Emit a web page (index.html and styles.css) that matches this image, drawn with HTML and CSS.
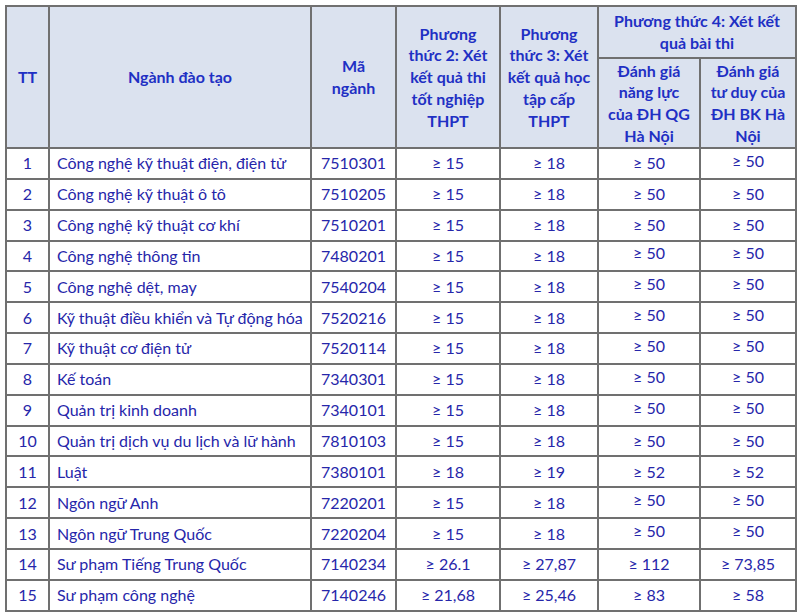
FILE: index.html
```html
<!DOCTYPE html>
<html lang="vi">
<head>
<meta charset="utf-8">
<link rel="stylesheet" href="styles.css">
</head>
<body>
<table class="score-table">
  <colgroup>
    <col class="c-tt">
    <col class="c-name">
    <col class="c-code">
    <col class="c-p2">
    <col class="c-p3">
    <col class="c-p4a">
    <col class="c-p4b">
  </colgroup>
  <thead>
    <tr class="h1">
      <th rowspan="2">TT</th>
      <th rowspan="2">Ngành đào tạo</th>
      <th rowspan="2">Mã<br>ngành</th>
      <th rowspan="2">Phương<br>thức 2: Xét<br>kết quả thi<br>tốt nghiệp<br>THPT</th>
      <th rowspan="2">Phương<br>thức 3: Xét<br>kết quả học<br>tập cấp<br>THPT</th>
      <th colspan="2">Phương thức 4: Xét kết<br>quả bài thi</th>
    </tr>
    <tr class="h2">
      <th>Đánh giá<br>năng lực<br>của ĐH QG<br>Hà Nội</th>
      <th>Đánh giá<br>tư duy của<br>ĐH BK Hà<br>Nội</th>
    </tr>
  </thead>
  <tbody>
    <tr><td>1</td><td class="name">Công nghệ kỹ thuật điện, điện tử</td><td>7510301</td><td>≥ 15</td><td>≥ 18</td><td>≥ 50</td><td class="up">≥ 50</td></tr>
    <tr><td>2</td><td class="name">Công nghệ kỹ thuật ô tô</td><td>7510205</td><td>≥ 15</td><td>≥ 18</td><td>≥ 50</td><td>≥ 50</td></tr>
    <tr><td>3</td><td class="name">Công nghệ kỹ thuật cơ khí</td><td>7510201</td><td>≥ 15</td><td>≥ 18</td><td>≥ 50</td><td>≥ 50</td></tr>
    <tr><td>4</td><td class="name">Công nghệ thông tin</td><td>7480201</td><td>≥ 15</td><td>≥ 18</td><td class="up">≥ 50</td><td class="up">≥ 50</td></tr>
    <tr><td>5</td><td class="name">Công nghệ dệt, may</td><td>7540204</td><td>≥ 15</td><td>≥ 18</td><td class="up">≥ 50</td><td class="up">≥ 50</td></tr>
    <tr><td>6</td><td class="name">Kỹ thuật điều khiển và Tự động hóa</td><td>7520216</td><td>≥ 15</td><td>≥ 18</td><td class="up">≥ 50</td><td class="up">≥ 50</td></tr>
    <tr><td>7</td><td class="name">Kỹ thuật cơ điện tử</td><td>7520114</td><td>≥ 15</td><td>≥ 18</td><td class="up">≥ 50</td><td class="up">≥ 50</td></tr>
    <tr><td>8</td><td class="name">Kế toán</td><td>7340301</td><td>≥ 15</td><td>≥ 18</td><td class="up">≥ 50</td><td class="up">≥ 50</td></tr>
    <tr><td>9</td><td class="name">Quản trị kinh doanh</td><td>7340101</td><td>≥ 15</td><td>≥ 18</td><td class="up">≥ 50</td><td class="up">≥ 50</td></tr>
    <tr><td>10</td><td class="name">Quản trị dịch vụ du lịch và lữ hành</td><td>7810103</td><td>≥ 15</td><td>≥ 18</td><td>≥ 50</td><td>≥ 50</td></tr>
    <tr><td>11</td><td class="name">Luật</td><td>7380101</td><td>≥ 18</td><td>≥ 19</td><td>≥ 52</td><td>≥ 52</td></tr>
    <tr><td>12</td><td class="name">Ngôn ngữ Anh</td><td>7220201</td><td>≥ 15</td><td>≥ 18</td><td class="up">≥ 50</td><td class="up">≥ 50</td></tr>
    <tr><td>13</td><td class="name">Ngôn ngữ Trung Quốc</td><td>7220204</td><td>≥ 15</td><td>≥ 18</td><td class="up">≥ 50</td><td class="up">≥ 50</td></tr>
    <tr><td>14</td><td class="name">Sư phạm Tiếng Trung Quốc</td><td>7140234</td><td>≥ 26.1</td><td>≥ 27,87</td><td>≥ 112</td><td>≥ 73,85</td></tr>
    <tr><td>15</td><td class="name">Sư phạm công nghệ</td><td>7140246</td><td>≥ 21,68</td><td>≥ 25,46</td><td>≥ 83</td><td>≥ 58</td></tr>
  </tbody>
</table>
</body>
</html>
```

FILE: styles.css
```css
html, body {
  margin: 0;
  padding: 0;
  background: #ffffff;
}

body {
  padding: 5px 0 0 5px;
  font-family: "Lato", "Liberation Sans", sans-serif;
}

.score-table {
  border-collapse: collapse;
  table-layout: fixed;
  width: 790px;
}

.c-tt { width: 43px; }
.c-name { width: 262px; }
.c-code { width: 85px; }
.c-p2 { width: 104px; }
.c-p3 { width: 98px; }
.c-p4a { width: 102px; }
.c-p4b { width: 96px; }

.score-table th,
.score-table td {
  border: 2px solid #707070;
  padding: 0;
  text-align: center;
  vertical-align: middle;
}

.score-table th {
  background: #dbe2ef;
  color: #1f30c4;
  font-weight: 700;
  font-size: 16px;
  line-height: 21.7px;
}

.h1 { height: 52px; }
.h2 { height: 90px; }

.score-table td {
  color: #2626aa;
  font-size: 16px;
  line-height: 18px;
  height: 28.85px;
}

.score-table td.name {
  text-align: left;
  padding-left: 7px;
}

.score-table td.up {
  height: 23.85px;
  padding-bottom: 5px;
}
```
